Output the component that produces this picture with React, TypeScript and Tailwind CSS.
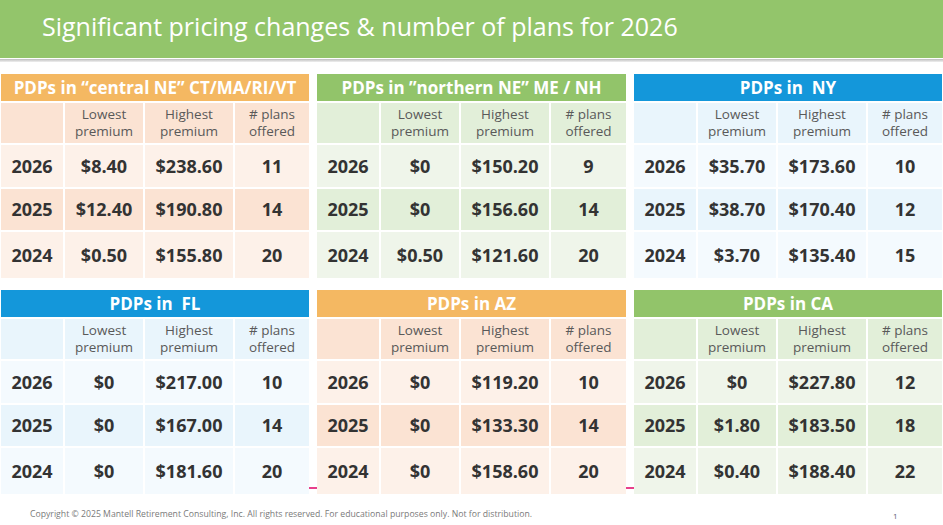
import React from "react";

type Theme = { head: string; alt: string; light: string };

const orange: Theme = { head: "bg-[#f4b862]", alt: "bg-[#fbe3d3]", light: "bg-[#fdf1e9]" };
const green: Theme = { head: "bg-[#92c46a]", alt: "bg-[#e2efd9]", light: "bg-[#eff5ea]" };
const blue: Theme = { head: "bg-[#1497da]", alt: "bg-[#e9f5fc]", light: "bg-[#f4fafe]" };

type Row = [string, string, string, string];

const tables: { title: string; theme: Theme; rows: Row[] }[] = [
  {
    title: "PDPs in “central NE” CT/MA/RI/VT",
    theme: orange,
    rows: [
      ["2026", "$8.40", "$238.60", "11"],
      ["2025", "$12.40", "$190.80", "14"],
      ["2024", "$0.50", "$155.80", "20"],
    ],
  },
  {
    title: "PDPs in ”northern NE” ME / NH",
    theme: green,
    rows: [
      ["2026", "$0", "$150.20", "9"],
      ["2025", "$0", "$156.60", "14"],
      ["2024", "$0.50", "$121.60", "20"],
    ],
  },
  {
    title: "PDPs in\u00a0\u00a0NY",
    theme: blue,
    rows: [
      ["2026", "$35.70", "$173.60", "10"],
      ["2025", "$38.70", "$170.40", "12"],
      ["2024", "$3.70", "$135.40", "15"],
    ],
  },
  {
    title: "PDPs in\u00a0\u00a0FL",
    theme: blue,
    rows: [
      ["2026", "$0", "$217.00", "10"],
      ["2025", "$0", "$167.00", "14"],
      ["2024", "$0", "$181.60", "20"],
    ],
  },
  {
    title: "PDPs in AZ",
    theme: orange,
    rows: [
      ["2026", "$0", "$119.20", "10"],
      ["2025", "$0", "$133.30", "14"],
      ["2024", "$0", "$158.60", "20"],
    ],
  },
  {
    title: "PDPs in CA",
    theme: green,
    rows: [
      ["2026", "$0", "$227.80", "12"],
      ["2025", "$1.80", "$183.50", "18"],
      ["2024", "$0.40", "$188.40", "22"],
    ],
  },
];

const rowHeights = ["h-[42px]", "h-[41px]", "h-[46px]"];

const heads: [string, string][] = [
  ["Lowest", "premium"],
  ["Highest", "premium"],
  ["# plans", "offered"],
];

const PlanTable: React.FC<{ title: string; theme: Theme; rows: Row[] }> = ({ title, theme, rows }) => {
  return (
    <div className="flex flex-col gap-[2px] bg-white">
      <div className={`${theme.head} h-[27px] flex items-center justify-center text-white font-bold text-[17px] whitespace-pre`}>
        {title}
      </div>
      <div className="grid grid-cols-[62px_78px_88px_1fr] gap-x-[2px] h-[40px]">
        <div className={theme.alt} />
        {heads.map(([a, b]) => (
          <div
            key={a}
            className={`${theme.alt} flex flex-col items-center justify-center text-center text-[13.5px] leading-[17px] text-[#595959]`}
          >
            <span>{a}</span>
            <span>{b}</span>
          </div>
        ))}
      </div>
      {rows.map((r, i) => (
        <div key={r[0]} className={`grid grid-cols-[62px_78px_88px_1fr] gap-x-[2px] ${rowHeights[i]}`}>
          {r.map((c, j) => (
            <div
              key={j}
              className={`${i === 1 ? theme.alt : theme.light} flex items-center justify-center font-bold text-[18px] text-[#333333]`}
            >
              {c}
            </div>
          ))}
        </div>
      ))}
    </div>
  );
};

export default function App() {
  return (
    <div className="relative w-[943px] h-[525px] bg-white overflow-hidden font-['Open_Sans',sans-serif]">
      <div className="h-[58px] bg-[#93c56b] flex items-center pl-[42px] pb-[5px]">
        <h1 className="text-white text-[25px] font-normal leading-none">
          Significant pricing changes &amp; number of plans for 2026
        </h1>
      </div>
      <div className="mt-[1px] h-[3px] bg-gradient-to-b from-[#bdbdbd] to-[#f0f0f0]" />

      <div className="absolute left-[300px] top-[487px] w-[340px] h-[1.5px] bg-[#e8408c]" />

      <div className="relative mt-[12px] pl-[1px] grid grid-cols-[308px_309px_308px] gap-x-[8px] gap-y-[12px]">
        {tables.map((t) => (
          <PlanTable key={t.title} {...t} />
        ))}
      </div>

      <div className="absolute left-[30px] top-[508px] text-[8.7px] text-[#7a7a7a]">
        Copyright © 2025 Mantell Retirement Consulting, Inc. All rights reserved. For educational purposes only. Not for distribution.
      </div>
      <div className="absolute left-[893px] top-[510px] text-[8px] text-[#556070]">1</div>
    </div>
  );
}
